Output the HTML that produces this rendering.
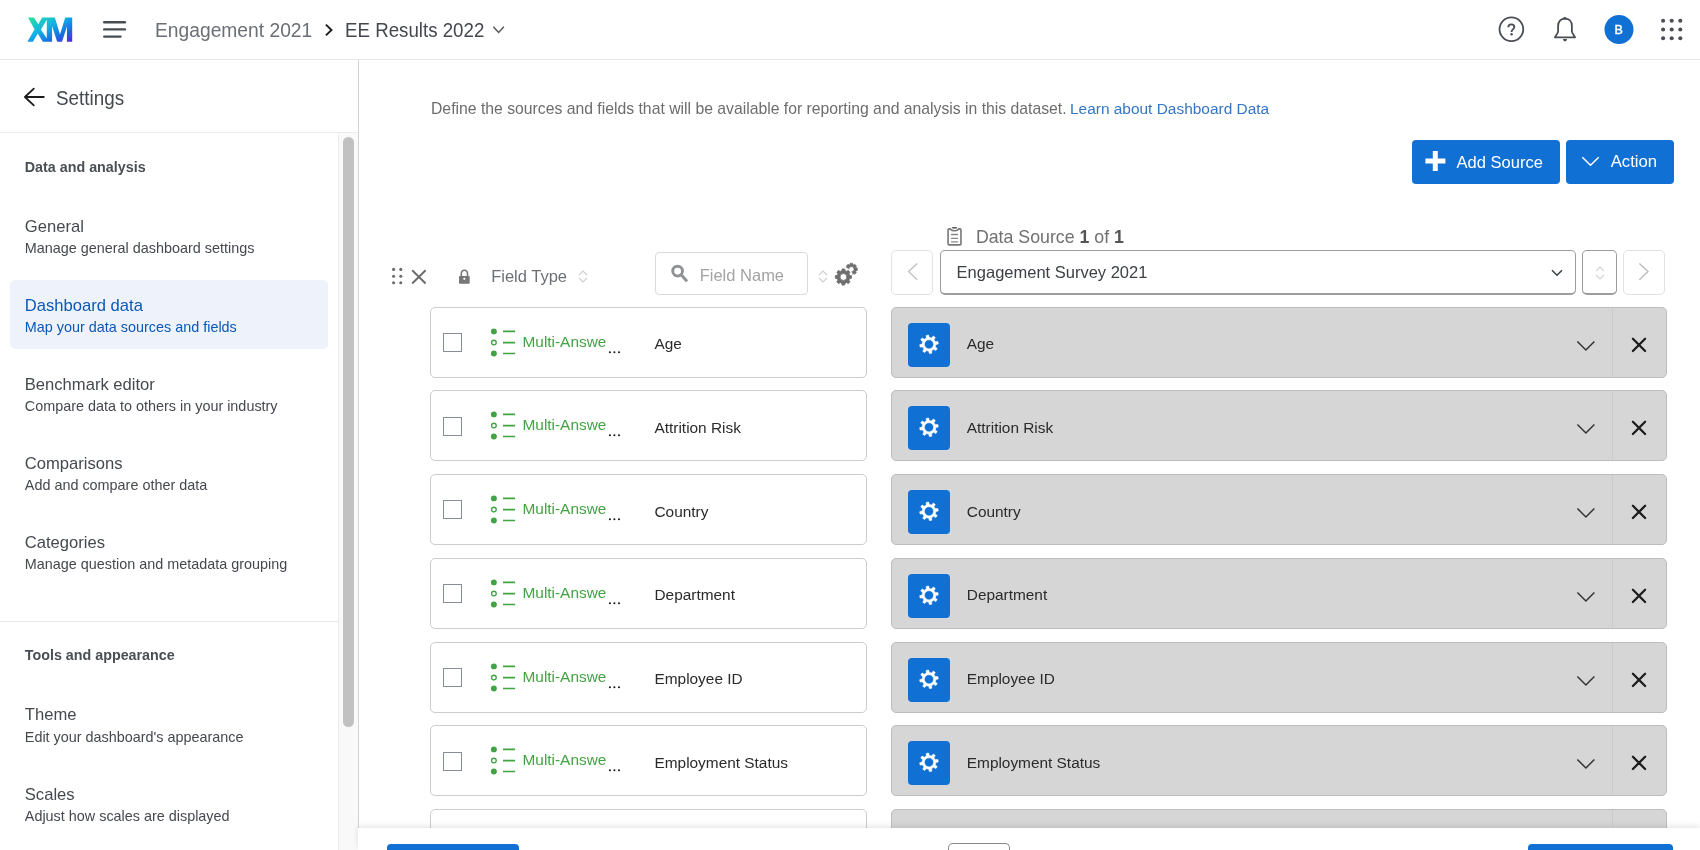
<!DOCTYPE html>
<html><head><meta charset="utf-8"><title>Dashboard data</title>
<style>
html,body{margin:0;padding:0;width:1700px;height:850px;overflow:hidden;background:#fff;}
body{position:relative;font-family:"Liberation Sans",sans-serif;}
.a{position:absolute;box-sizing:border-box;}
.t{position:absolute;white-space:nowrap;line-height:1;}
svg.a{overflow:visible;}
</style></head><body>
<div id="root" style="position:absolute;left:0;top:0;width:1700px;height:850px;will-change:transform;background:#fff;overflow:hidden">
<div class="a" style="left:0.0px;top:0.0px;width:1700.0px;height:59.0px;background:#fff"></div>
<div class="a" style="left:0.0px;top:59.0px;width:1700.0px;height:1.0px;background:#e6e6e6"></div>
<svg class="a" style="left:24.0px;top:14.0px" width="54" height="32" viewBox="0 0 1434 850"><defs><linearGradient id="xmg" x1="0" y1="0" x2="1" y2="1">
<stop offset="0" stop-color="#2ee39a"/><stop offset="0.42" stop-color="#10b2e6"/><stop offset="0.72" stop-color="#1670e4"/><stop offset="1" stop-color="#5a22e0"/></linearGradient></defs>
<path fill="url(#xmg)" fill-rule="evenodd" d="M105 95 L265 95 L380 275 L480 95 L820 95 L955 545 L1095 95 L1280 95 L1280 740 L1140 740 L1140 330 L1010 740 L880 740 L745 320 L745 740 L500 740 L365 520 L235 740 L90 740 L280 405 Z M605 155 L450 410 L605 650 Z"/></svg>
<svg class="a" style="left:102.0px;top:20.0px" width="26" height="18" viewBox="0 0 26 18"><g stroke="#484c53" stroke-width="2.4" stroke-linecap="round"><line x1="2.2" y1="2.2" x2="22.9" y2="2.2"/><line x1="2.2" y1="9.4" x2="22.9" y2="9.4"/><line x1="2.2" y1="16.6" x2="18.5" y2="16.6"/></g></svg>
<div class="t" style="left:155.3px;top:20.00px;font-size:20.0px;color:#6b6f76;font-weight:400;transform:scaleX(0.962);transform-origin:0 0;">Engagement 2021</div>
<svg class="a" style="left:321.0px;top:22.0px" width="14" height="16" viewBox="0 0 14 16"><path d="M4.9 2.6 L10.5 8 L4.9 13.4" fill="none" stroke="#1a1a1a" stroke-width="1.9"/></svg>
<div class="t" style="left:344.6px;top:20.00px;font-size:20.0px;color:#44484e;font-weight:400;transform:scaleX(0.935);transform-origin:0 0;">EE Results 2022</div>
<svg class="a" style="left:490.0px;top:24.0px" width="18" height="12" viewBox="0 0 18 12"><path d="M3.3 2.8 L8.6 8.4 L13.9 2.8" fill="none" stroke="#555" stroke-width="1.4"/></svg>
<svg class="a" style="left:1496.0px;top:14.0px" width="30" height="30" viewBox="0 0 30 30"><circle cx="15.4" cy="15.3" r="11.85" fill="none" stroke="#4a4e55" stroke-width="1.8"/><path d="M12.3 13.3 C12.3 11.3 13.6 10.4 15.3 10.4 C17.1 10.4 18.3 11.6 18.3 13.1 C18.3 15.3 15.6 15.4 15.6 17.6 V18" fill="none" stroke="#4a4e55" stroke-width="1.9"/><circle cx="15.6" cy="20.2" r="1.2" fill="#4a4e55"/></svg>
<svg class="a" style="left:1552.0px;top:15.0px" width="26" height="28" viewBox="0 0 26 28"><path d="M13 3.7 C8.7 3.7 6.1 6.6 6.1 11 V16.6 C6.1 18.2 3.4 21.2 2.9 22.3 H23.1 C22.6 21.2 19.9 18.2 19.9 16.6 V11 C19.9 6.6 17.3 3.7 13 3.7 Z" fill="none" stroke="#4a4e55" stroke-width="1.8" stroke-linejoin="round"/><path d="M10.9 24.0 H15.1 C14.9 25.6 14 26.3 13 26.3 C12 26.3 11.1 25.6 10.9 24.0Z" fill="#4a4e55"/><ellipse cx="12.9" cy="3.2" rx="1.7" ry="1.2" fill="#4a4e55"/></svg>
<svg class="a" style="left:1603.5px;top:15.0px" width="30" height="30" viewBox="0 0 30 30"><circle cx="15" cy="14.6" r="14.5" fill="#1170d4"/></svg>
<div class="t" style="left:1612.6px;top:24.00px;font-size:12.5px;color:#ffffff;font-weight:400;width:12px;text-align:center;-webkit-text-stroke:0.45px #fff;">B</div>
<svg class="a" style="left:1659.0px;top:18.0px" width="26" height="26" viewBox="0 0 26 26"><circle cx="4.10" cy="2.70" r="2.05" fill="#4a4e55"/><circle cx="12.70" cy="2.70" r="2.05" fill="#4a4e55"/><circle cx="21.30" cy="2.70" r="2.05" fill="#4a4e55"/><circle cx="4.10" cy="11.45" r="2.05" fill="#4a4e55"/><circle cx="12.70" cy="11.45" r="2.05" fill="#4a4e55"/><circle cx="21.30" cy="11.45" r="2.05" fill="#4a4e55"/><circle cx="4.10" cy="20.20" r="2.05" fill="#4a4e55"/><circle cx="12.70" cy="20.20" r="2.05" fill="#4a4e55"/><circle cx="21.30" cy="20.20" r="2.05" fill="#4a4e55"/></svg>
<div class="a" style="left:357.5px;top:60.0px;width:1.3px;height:790.0px;background:#d2d2d2"></div>
<svg class="a" style="left:22.0px;top:86.0px" width="24" height="22" viewBox="0 0 24 22"><path d="M11.8 2.6 L2.9 11 L11.8 19.4 M2.9 11 H21.8" fill="none" stroke="#1b1b1b" stroke-width="1.8" stroke-linecap="round" stroke-linejoin="round"/></svg>
<div class="t" style="left:56.3px;top:88.00px;font-size:20.5px;color:#44484e;font-weight:400;transform:scaleX(0.92);transform-origin:0 0;">Settings</div>
<div class="a" style="left:0.0px;top:132.0px;width:357.5px;height:1.0px;background:#ececec"></div>
<div class="a" style="left:338.0px;top:133.0px;width:19.5px;height:717.0px;background:#f9f9f9;border-left:1px solid #ececec"></div>
<div class="a" style="left:342.5px;top:137.0px;width:11.5px;height:590.0px;background:#c1c1c1;border-radius:6px"></div>
<div class="a" style="left:9.5px;top:280.4px;width:318.5px;height:69.0px;background:#eef3fb;border-radius:5px"></div>
<div class="t" style="left:24.8px;top:160.00px;font-size:14.3px;color:#4a4e55;font-weight:700;">Data and analysis</div>
<div class="t" style="left:24.8px;top:219.00px;font-size:16.6px;color:#45494f;font-weight:400;">General</div>
<div class="t" style="left:24.8px;top:241.00px;font-size:14.4px;color:#45494f;font-weight:400;">Manage general dashboard settings</div>
<div class="t" style="left:24.8px;top:298.00px;font-size:16.6px;color:#0b57b8;font-weight:400;">Dashboard data</div>
<div class="t" style="left:24.8px;top:320.00px;font-size:14.4px;color:#0b57b8;font-weight:400;">Map your data sources and fields</div>
<div class="t" style="left:24.8px;top:377.00px;font-size:16.6px;color:#45494f;font-weight:400;">Benchmark editor</div>
<div class="t" style="left:24.8px;top:399.00px;font-size:14.4px;color:#45494f;font-weight:400;">Compare data to others in your industry</div>
<div class="t" style="left:24.8px;top:456.00px;font-size:16.6px;color:#45494f;font-weight:400;">Comparisons</div>
<div class="t" style="left:24.8px;top:478.00px;font-size:14.4px;color:#45494f;font-weight:400;">Add and compare other data</div>
<div class="t" style="left:24.8px;top:535.00px;font-size:16.6px;color:#45494f;font-weight:400;">Categories</div>
<div class="t" style="left:24.8px;top:557.00px;font-size:14.4px;color:#45494f;font-weight:400;">Manage question and metadata grouping</div>
<div class="a" style="left:0.0px;top:621.0px;width:339.0px;height:1.0px;background:#e8e8e8"></div>
<div class="t" style="left:24.8px;top:648.00px;font-size:14.3px;color:#4a4e55;font-weight:700;">Tools and appearance</div>
<div class="t" style="left:24.8px;top:707.00px;font-size:16.6px;color:#45494f;font-weight:400;">Theme</div>
<div class="t" style="left:24.8px;top:730.00px;font-size:14.4px;color:#45494f;font-weight:400;">Edit your dashboard's appearance</div>
<div class="t" style="left:24.8px;top:787.00px;font-size:16.6px;color:#45494f;font-weight:400;">Scales</div>
<div class="t" style="left:24.8px;top:809.00px;font-size:14.4px;color:#45494f;font-weight:400;">Adjust how scales are displayed</div>
<div class="t" style="left:431.0px;top:101.00px;font-size:15.75px;color:#6d6d6d;font-weight:400;">Define the sources and fields that will be available for reporting and analysis in this dataset.</div>
<div class="t" style="left:1070.0px;top:101.00px;font-size:15.45px;color:#3476c4;font-weight:400;">Learn about Dashboard Data</div>
<div class="a" style="left:1411.8px;top:140.0px;width:148.0px;height:43.7px;background:#1170d4;border-radius:4px"></div>
<svg class="a" style="left:1425.0px;top:151.0px" width="21" height="20" viewBox="0 0 21 20"><path d="M10.3 0 V20 M0.4 10 H20.4" stroke="#fff" stroke-width="5"/></svg>
<div class="t" style="left:1456.6px;top:154.00px;font-size:16.5px;color:#fff;font-weight:400;">Add Source</div>
<div class="a" style="left:1566.2px;top:140.0px;width:107.8px;height:43.7px;background:#1170d4;border-radius:4px"></div>
<svg class="a" style="left:1580.0px;top:154.0px" width="22" height="14" viewBox="0 0 22 14"><path d="M2.3 3.3 L10.5 11.3 L18.7 3.3" fill="none" stroke="#fff" stroke-width="1.5"/></svg>
<div class="t" style="left:1610.7px;top:154.00px;font-size:16.7px;color:#fff;font-weight:400;">Action</div>
<svg class="a" style="left:945.0px;top:225.0px" width="19" height="22" viewBox="0 0 19 22"><path d="M3.07 5.0 Q3.07 3.9 4.2 3.9 L4.9 3.9 Q5.6 3.9 6.1 4.8 Q6.9 5.75 9.5 5.75 Q12.1 5.75 12.9 4.8 Q13.4 3.9 14.1 3.9 L14.9 3.9 Q15.97 3.9 15.97 5.0 L15.97 18.8 Q15.97 19.92 14.9 19.92 L4.2 19.92 Q3.07 19.92 3.07 18.8 Z" fill="none" stroke="#777" stroke-width="1.6"/><path d="M6.6 1.9 H12.4 Q12.2 3.8 9.5 3.8 Q6.8 3.8 6.6 1.9 Z" fill="#666"/><path d="M6.5 9.5 H12.5 M6.5 13.3 H12.5 M6.5 16.8 H12.5" stroke="#888" stroke-width="1.3" stroke-linecap="round"/></svg>
<div class="t" style="left:975.9px;top:229.00px;font-size:17.75px;color:#707070;font-weight:400;">Data Source <b style="color:#555">1</b> of <b style="color:#555">1</b></div>
<svg class="a" style="left:390.0px;top:266.0px" width="14" height="20" viewBox="0 0 14 20"><circle cx="3.6" cy="3.4" r="1.55" fill="#6b6b6b"/><circle cx="3.6" cy="10.2" r="1.55" fill="#6b6b6b"/><circle cx="3.6" cy="16.8" r="1.55" fill="#6b6b6b"/><circle cx="10.8" cy="3.4" r="1.55" fill="#6b6b6b"/><circle cx="10.8" cy="10.2" r="1.55" fill="#6b6b6b"/><circle cx="10.8" cy="16.8" r="1.55" fill="#6b6b6b"/></svg>
<svg class="a" style="left:410.0px;top:268.0px" width="18" height="18" viewBox="0 0 18 18"><path d="M2.2 2.3 L15.6 15.5 M15.6 2.3 L2.2 15.5" stroke="#6b6b6b" stroke-width="1.9"/></svg>
<svg class="a" style="left:457.0px;top:268.0px" width="15" height="18" viewBox="0 0 15 18"><path d="M4.3 8 V5.9 C4.3 3.6 5.7 2.2 7.4 2.2 C9.1 2.2 10.5 3.6 10.5 5.9 V8" fill="none" stroke="#777" stroke-width="1.6"/><rect x="2" y="7.9" width="10.7" height="7.9" rx="0.8" fill="#777"/><circle cx="7.3" cy="10.8" r="1.1" fill="#fff"/></svg>
<div class="t" style="left:491.2px;top:268.00px;font-size:16.5px;color:#6b6f76;font-weight:400;">Field Type</div>
<svg class="a" style="left:577.8px;top:270.2px" width="10" height="13" viewBox="0 0 10 13"><path d="M1 5 L5 1 L9 5 M1 8 L5 12 L9 8" fill="none" stroke="#cfcfcf" stroke-width="1.1"/></svg>
<div class="a" style="left:654.8px;top:252.0px;width:153.0px;height:42.7px;border:1px solid #dadada;border-radius:4px;background:#fff"></div>
<svg class="a" style="left:668.0px;top:262.0px" width="24" height="24" viewBox="0 0 24 24"><circle cx="9.6" cy="9.1" r="4.9" fill="none" stroke="#909295" stroke-width="2.9"/><path d="M13.4 12.9 L18.3 18.4" stroke="#909295" stroke-width="3" stroke-linecap="round"/></svg>
<div class="t" style="left:699.7px;top:267.00px;font-size:16.5px;color:#a3a3a3;font-weight:400;">Field Name</div>
<svg class="a" style="left:818.0px;top:269.8px" width="10" height="13" viewBox="0 0 10 13"><path d="M1 5 L5 1 L9 5 M1 8 L5 12 L9 8" fill="none" stroke="#cfcfcf" stroke-width="1.1"/></svg>
<svg class="a" style="left:832.0px;top:260.0px" width="30" height="28" viewBox="0 0 30 28"><path fill="#6e6e6e" stroke="#6e6e6e" stroke-width="0.7" stroke-linejoin="round" fill-rule="evenodd" d="M17.92 4.63 L18.15 3.33 L20.65 3.33 L20.88 4.63 L21.24 4.77 L21.58 4.92 L22.67 4.17 L24.43 5.93 L23.68 7.02 L23.83 7.36 L23.97 7.72 L25.27 7.95 L25.27 10.45 L23.97 10.68 L23.83 11.04 L23.68 11.38 L24.43 12.47 L22.67 14.23 L21.58 13.48 L21.24 13.63 L20.88 13.77 L20.65 15.07 L18.15 15.07 L17.92 13.77 L17.56 13.63 L17.22 13.48 L16.13 14.23 L14.37 12.47 L15.12 11.38 L14.97 11.04 L14.83 10.68 L13.53 10.45 L13.53 7.95 L14.83 7.72 L14.97 7.36 L15.12 7.02 L14.37 5.93 L16.13 4.17 L17.22 4.92 L17.56 4.77 Z M22.00 9.20 A2.6 2.6 0 1 0 16.80 9.20 A2.6 2.6 0 1 0 22.00 9.20 Z"/><circle cx="11.4" cy="17.0" r="9.8" fill="#fff"/><path fill="#6e6e6e" stroke="#6e6e6e" stroke-width="0.8" stroke-linejoin="round" fill-rule="evenodd" d="M9.74 10.82 L10.12 8.90 L12.68 8.90 L13.06 10.82 L13.85 11.09 L14.60 11.46 L16.22 10.37 L18.03 12.18 L16.94 13.80 L17.31 14.55 L17.58 15.34 L19.50 15.72 L19.50 18.28 L17.58 18.66 L17.31 19.45 L16.94 20.20 L18.03 21.82 L16.22 23.63 L14.60 22.54 L13.85 22.91 L13.06 23.18 L12.68 25.10 L10.12 25.10 L9.74 23.18 L8.95 22.91 L8.20 22.54 L6.58 23.63 L4.77 21.82 L5.86 20.20 L5.49 19.45 L5.22 18.66 L3.30 18.28 L3.30 15.72 L5.22 15.34 L5.49 14.55 L5.86 13.80 L4.77 12.18 L6.58 10.37 L8.20 11.46 L8.95 11.09 Z M14.80 17.00 A3.4 3.4 0 1 0 8.00 17.00 A3.4 3.4 0 1 0 14.80 17.00 Z"/></svg>
<div class="a" style="left:891.4px;top:250.3px;width:42.0px;height:44.3px;border:1.3px solid #e2e2e2;border-radius:5px;background:#fff"></div>
<svg class="a" style="left:906.0px;top:262.0px" width="14" height="20" viewBox="0 0 14 20"><path d="M11.2 1.4 L2.6 9.6 L11.2 17.8" fill="none" stroke="#c2c2c2" stroke-width="1.4"/></svg>
<div class="a" style="left:939.7px;top:250.3px;width:636.3px;height:44.3px;border:1.5px solid #9d9d9d;border-bottom-width:2px;border-radius:5px;background:#fff"></div>
<div class="t" style="left:956.6px;top:264.00px;font-size:16.5px;color:#3d4046;font-weight:400;">Engagement Survey 2021</div>
<svg class="a" style="left:1550.0px;top:268.0px" width="14" height="10" viewBox="0 0 14 10"><path d="M2 2.2 L7 7.2 L12 2.2" fill="none" stroke="#3c4048" stroke-width="1.6"/></svg>
<div class="a" style="left:1582.1px;top:250.3px;width:34.6px;height:44.3px;border:1.5px solid #9d9d9d;border-bottom-width:2px;border-radius:5px;background:#fff"></div>
<svg class="a" style="left:1594.9px;top:266.2px" width="10" height="14" viewBox="0 0 10 14"><path d="M1 5 L5 1 L9 5 M1 9 L5 13 L9 9" fill="none" stroke="#d3d3d3" stroke-width="1.1"/></svg>
<div class="a" style="left:1622.7px;top:250.3px;width:42.3px;height:44.3px;border:1.3px solid #e2e2e2;border-radius:5px;background:#fff"></div>
<svg class="a" style="left:1637.0px;top:262.0px" width="14" height="20" viewBox="0 0 14 20"><path d="M2.4 1.4 L11 9.6 L2.4 17.8" fill="none" stroke="#bdbdbd" stroke-width="1.4"/></svg>
<div class="a" style="left:430.4px;top:306.7px;width:436.5px;height:71.0px;border:1px solid #cdcdcd;border-radius:5px;background:#fff"></div>
<div class="a" style="left:891.0px;top:306.7px;width:776.0px;height:71.0px;border:1px solid #bdbdbd;border-radius:5px;background:#d6d6d6"></div>
<div class="a" style="left:443.0px;top:332.9px;width:19.1px;height:19.0px;border:1.6px solid #868c98;background:#fff"></div>
<svg class="a" style="left:488.0px;top:324.7px" width="30" height="34" viewBox="0 0 30 34"><circle cx="5.9" cy="6.4" r="2.95" fill="#42a344"/><circle cx="5.9" cy="17.6" r="2.35" fill="none" stroke="#42a344" stroke-width="1.3"/><circle cx="5.9" cy="28.5" r="2.95" fill="#42a344"/><path d="M15 6.4 H27.1 M15 17.6 H27.1 M15 28.5 H27.1" stroke="#42a344" stroke-width="1.6"/></svg>
<div class="t" style="left:522.5px;top:334.00px;font-size:15.4px;color:#42a344;font-weight:400;">Multi-Answe</div>
<svg class="a" style="left:606.0px;top:348.7px" width="16" height="6" viewBox="0 0 16 6"><circle cx="3.9" cy="3.3" r="1.05" fill="#1a1a1a"/><circle cx="8.4" cy="3.3" r="1.05" fill="#1a1a1a"/><circle cx="13.0" cy="3.3" r="1.05" fill="#1a1a1a"/></svg>
<div class="t" style="left:654.5px;top:336.00px;font-size:15.4px;color:#2b2b2b;font-weight:400;">Age</div>
<div class="a" style="left:908.2px;top:322.7px;width:42.2px;height:44.0px;background:#1170d4;border-radius:4px"></div>
<svg class="a" style="left:908.2px;top:322.7px" width="42" height="44" viewBox="0 0 42 44"><path fill="#fff" stroke="#fff" stroke-width="0.6" stroke-linejoin="round" fill-rule="evenodd" d="M18.40 15.02 L18.20 12.43 L20.59 12.01 L21.30 14.51 L22.47 14.66 L23.60 15.02 L25.29 13.05 L27.28 14.44 L26.01 16.71 L26.74 17.65 L27.28 18.70 L29.87 18.50 L30.29 20.89 L27.79 21.60 L27.64 22.77 L27.28 23.90 L29.25 25.59 L27.86 27.58 L25.59 26.31 L24.65 27.04 L23.60 27.58 L23.80 30.17 L21.41 30.59 L20.70 28.09 L19.53 27.94 L18.40 27.58 L16.71 29.55 L14.72 28.16 L15.99 25.89 L15.26 24.95 L14.72 23.90 L12.13 24.10 L11.71 21.71 L14.21 21.00 L14.36 19.83 L14.72 18.70 L12.75 17.01 L14.14 15.02 L16.41 16.29 L17.35 15.56 Z M25.60 21.30 A4.6 4.6 0 1 0 16.40 21.30 A4.6 4.6 0 1 0 25.60 21.30 Z"/></svg>
<div class="t" style="left:966.8px;top:336.00px;font-size:15.4px;color:#2b2b2b;font-weight:400;">Age</div>
<svg class="a" style="left:1575.0px;top:338.7px" width="22" height="14" viewBox="0 0 22 14"><path d="M2.4 2.5 L10.9 11 L19.4 2.5" fill="none" stroke="#333" stroke-width="1.5"/></svg>
<div class="a" style="left:1612.2px;top:307.7px;width:1.0px;height:69.0px;background:#cbcbcb"></div>
<svg class="a" style="left:1630.0px;top:335.7px" width="18" height="18" viewBox="0 0 18 18"><path d="M2.9 2.8 L15.1 15.0 M15.1 2.8 L2.9 15.0" stroke="#1c1c1c" stroke-width="2.3" stroke-linecap="round"/></svg>
<div class="a" style="left:430.4px;top:390.4px;width:436.5px;height:71.0px;border:1px solid #cdcdcd;border-radius:5px;background:#fff"></div>
<div class="a" style="left:891.0px;top:390.4px;width:776.0px;height:71.0px;border:1px solid #bdbdbd;border-radius:5px;background:#d6d6d6"></div>
<div class="a" style="left:443.0px;top:416.6px;width:19.1px;height:19.0px;border:1.6px solid #868c98;background:#fff"></div>
<svg class="a" style="left:488.0px;top:408.4px" width="30" height="34" viewBox="0 0 30 34"><circle cx="5.9" cy="6.4" r="2.95" fill="#42a344"/><circle cx="5.9" cy="17.6" r="2.35" fill="none" stroke="#42a344" stroke-width="1.3"/><circle cx="5.9" cy="28.5" r="2.95" fill="#42a344"/><path d="M15 6.4 H27.1 M15 17.6 H27.1 M15 28.5 H27.1" stroke="#42a344" stroke-width="1.6"/></svg>
<div class="t" style="left:522.5px;top:417.00px;font-size:15.4px;color:#42a344;font-weight:400;">Multi-Answe</div>
<svg class="a" style="left:606.0px;top:432.4px" width="16" height="6" viewBox="0 0 16 6"><circle cx="3.9" cy="3.3" r="1.05" fill="#1a1a1a"/><circle cx="8.4" cy="3.3" r="1.05" fill="#1a1a1a"/><circle cx="13.0" cy="3.3" r="1.05" fill="#1a1a1a"/></svg>
<div class="t" style="left:654.5px;top:420.00px;font-size:15.4px;color:#2b2b2b;font-weight:400;">Attrition Risk</div>
<div class="a" style="left:908.2px;top:406.4px;width:42.2px;height:44.0px;background:#1170d4;border-radius:4px"></div>
<svg class="a" style="left:908.2px;top:406.4px" width="42" height="44" viewBox="0 0 42 44"><path fill="#fff" stroke="#fff" stroke-width="0.6" stroke-linejoin="round" fill-rule="evenodd" d="M18.40 15.02 L18.20 12.43 L20.59 12.01 L21.30 14.51 L22.47 14.66 L23.60 15.02 L25.29 13.05 L27.28 14.44 L26.01 16.71 L26.74 17.65 L27.28 18.70 L29.87 18.50 L30.29 20.89 L27.79 21.60 L27.64 22.77 L27.28 23.90 L29.25 25.59 L27.86 27.58 L25.59 26.31 L24.65 27.04 L23.60 27.58 L23.80 30.17 L21.41 30.59 L20.70 28.09 L19.53 27.94 L18.40 27.58 L16.71 29.55 L14.72 28.16 L15.99 25.89 L15.26 24.95 L14.72 23.90 L12.13 24.10 L11.71 21.71 L14.21 21.00 L14.36 19.83 L14.72 18.70 L12.75 17.01 L14.14 15.02 L16.41 16.29 L17.35 15.56 Z M25.60 21.30 A4.6 4.6 0 1 0 16.40 21.30 A4.6 4.6 0 1 0 25.60 21.30 Z"/></svg>
<div class="t" style="left:966.8px;top:420.00px;font-size:15.4px;color:#2b2b2b;font-weight:400;">Attrition Risk</div>
<svg class="a" style="left:1575.0px;top:422.4px" width="22" height="14" viewBox="0 0 22 14"><path d="M2.4 2.5 L10.9 11 L19.4 2.5" fill="none" stroke="#333" stroke-width="1.5"/></svg>
<div class="a" style="left:1612.2px;top:391.4px;width:1.0px;height:69.0px;background:#cbcbcb"></div>
<svg class="a" style="left:1630.0px;top:419.4px" width="18" height="18" viewBox="0 0 18 18"><path d="M2.9 2.8 L15.1 15.0 M15.1 2.8 L2.9 15.0" stroke="#1c1c1c" stroke-width="2.3" stroke-linecap="round"/></svg>
<div class="a" style="left:430.4px;top:474.1px;width:436.5px;height:71.0px;border:1px solid #cdcdcd;border-radius:5px;background:#fff"></div>
<div class="a" style="left:891.0px;top:474.1px;width:776.0px;height:71.0px;border:1px solid #bdbdbd;border-radius:5px;background:#d6d6d6"></div>
<div class="a" style="left:443.0px;top:500.3px;width:19.1px;height:19.0px;border:1.6px solid #868c98;background:#fff"></div>
<svg class="a" style="left:488.0px;top:492.1px" width="30" height="34" viewBox="0 0 30 34"><circle cx="5.9" cy="6.4" r="2.95" fill="#42a344"/><circle cx="5.9" cy="17.6" r="2.35" fill="none" stroke="#42a344" stroke-width="1.3"/><circle cx="5.9" cy="28.5" r="2.95" fill="#42a344"/><path d="M15 6.4 H27.1 M15 17.6 H27.1 M15 28.5 H27.1" stroke="#42a344" stroke-width="1.6"/></svg>
<div class="t" style="left:522.5px;top:501.00px;font-size:15.4px;color:#42a344;font-weight:400;">Multi-Answe</div>
<svg class="a" style="left:606.0px;top:516.1px" width="16" height="6" viewBox="0 0 16 6"><circle cx="3.9" cy="3.3" r="1.05" fill="#1a1a1a"/><circle cx="8.4" cy="3.3" r="1.05" fill="#1a1a1a"/><circle cx="13.0" cy="3.3" r="1.05" fill="#1a1a1a"/></svg>
<div class="t" style="left:654.5px;top:504.00px;font-size:15.4px;color:#2b2b2b;font-weight:400;">Country</div>
<div class="a" style="left:908.2px;top:490.1px;width:42.2px;height:44.0px;background:#1170d4;border-radius:4px"></div>
<svg class="a" style="left:908.2px;top:490.1px" width="42" height="44" viewBox="0 0 42 44"><path fill="#fff" stroke="#fff" stroke-width="0.6" stroke-linejoin="round" fill-rule="evenodd" d="M18.40 15.02 L18.20 12.43 L20.59 12.01 L21.30 14.51 L22.47 14.66 L23.60 15.02 L25.29 13.05 L27.28 14.44 L26.01 16.71 L26.74 17.65 L27.28 18.70 L29.87 18.50 L30.29 20.89 L27.79 21.60 L27.64 22.77 L27.28 23.90 L29.25 25.59 L27.86 27.58 L25.59 26.31 L24.65 27.04 L23.60 27.58 L23.80 30.17 L21.41 30.59 L20.70 28.09 L19.53 27.94 L18.40 27.58 L16.71 29.55 L14.72 28.16 L15.99 25.89 L15.26 24.95 L14.72 23.90 L12.13 24.10 L11.71 21.71 L14.21 21.00 L14.36 19.83 L14.72 18.70 L12.75 17.01 L14.14 15.02 L16.41 16.29 L17.35 15.56 Z M25.60 21.30 A4.6 4.6 0 1 0 16.40 21.30 A4.6 4.6 0 1 0 25.60 21.30 Z"/></svg>
<div class="t" style="left:966.8px;top:504.00px;font-size:15.4px;color:#2b2b2b;font-weight:400;">Country</div>
<svg class="a" style="left:1575.0px;top:506.1px" width="22" height="14" viewBox="0 0 22 14"><path d="M2.4 2.5 L10.9 11 L19.4 2.5" fill="none" stroke="#333" stroke-width="1.5"/></svg>
<div class="a" style="left:1612.2px;top:475.1px;width:1.0px;height:69.0px;background:#cbcbcb"></div>
<svg class="a" style="left:1630.0px;top:503.1px" width="18" height="18" viewBox="0 0 18 18"><path d="M2.9 2.8 L15.1 15.0 M15.1 2.8 L2.9 15.0" stroke="#1c1c1c" stroke-width="2.3" stroke-linecap="round"/></svg>
<div class="a" style="left:430.4px;top:557.9px;width:436.5px;height:71.0px;border:1px solid #cdcdcd;border-radius:5px;background:#fff"></div>
<div class="a" style="left:891.0px;top:557.9px;width:776.0px;height:71.0px;border:1px solid #bdbdbd;border-radius:5px;background:#d6d6d6"></div>
<div class="a" style="left:443.0px;top:584.1px;width:19.1px;height:19.0px;border:1.6px solid #868c98;background:#fff"></div>
<svg class="a" style="left:488.0px;top:575.9px" width="30" height="34" viewBox="0 0 30 34"><circle cx="5.9" cy="6.4" r="2.95" fill="#42a344"/><circle cx="5.9" cy="17.6" r="2.35" fill="none" stroke="#42a344" stroke-width="1.3"/><circle cx="5.9" cy="28.5" r="2.95" fill="#42a344"/><path d="M15 6.4 H27.1 M15 17.6 H27.1 M15 28.5 H27.1" stroke="#42a344" stroke-width="1.6"/></svg>
<div class="t" style="left:522.5px;top:585.00px;font-size:15.4px;color:#42a344;font-weight:400;">Multi-Answe</div>
<svg class="a" style="left:606.0px;top:599.9px" width="16" height="6" viewBox="0 0 16 6"><circle cx="3.9" cy="3.3" r="1.05" fill="#1a1a1a"/><circle cx="8.4" cy="3.3" r="1.05" fill="#1a1a1a"/><circle cx="13.0" cy="3.3" r="1.05" fill="#1a1a1a"/></svg>
<div class="t" style="left:654.5px;top:587.00px;font-size:15.4px;color:#2b2b2b;font-weight:400;">Department</div>
<div class="a" style="left:908.2px;top:573.9px;width:42.2px;height:44.0px;background:#1170d4;border-radius:4px"></div>
<svg class="a" style="left:908.2px;top:573.9px" width="42" height="44" viewBox="0 0 42 44"><path fill="#fff" stroke="#fff" stroke-width="0.6" stroke-linejoin="round" fill-rule="evenodd" d="M18.40 15.02 L18.20 12.43 L20.59 12.01 L21.30 14.51 L22.47 14.66 L23.60 15.02 L25.29 13.05 L27.28 14.44 L26.01 16.71 L26.74 17.65 L27.28 18.70 L29.87 18.50 L30.29 20.89 L27.79 21.60 L27.64 22.77 L27.28 23.90 L29.25 25.59 L27.86 27.58 L25.59 26.31 L24.65 27.04 L23.60 27.58 L23.80 30.17 L21.41 30.59 L20.70 28.09 L19.53 27.94 L18.40 27.58 L16.71 29.55 L14.72 28.16 L15.99 25.89 L15.26 24.95 L14.72 23.90 L12.13 24.10 L11.71 21.71 L14.21 21.00 L14.36 19.83 L14.72 18.70 L12.75 17.01 L14.14 15.02 L16.41 16.29 L17.35 15.56 Z M25.60 21.30 A4.6 4.6 0 1 0 16.40 21.30 A4.6 4.6 0 1 0 25.60 21.30 Z"/></svg>
<div class="t" style="left:966.8px;top:587.00px;font-size:15.4px;color:#2b2b2b;font-weight:400;">Department</div>
<svg class="a" style="left:1575.0px;top:589.9px" width="22" height="14" viewBox="0 0 22 14"><path d="M2.4 2.5 L10.9 11 L19.4 2.5" fill="none" stroke="#333" stroke-width="1.5"/></svg>
<div class="a" style="left:1612.2px;top:558.9px;width:1.0px;height:69.0px;background:#cbcbcb"></div>
<svg class="a" style="left:1630.0px;top:586.9px" width="18" height="18" viewBox="0 0 18 18"><path d="M2.9 2.8 L15.1 15.0 M15.1 2.8 L2.9 15.0" stroke="#1c1c1c" stroke-width="2.3" stroke-linecap="round"/></svg>
<div class="a" style="left:430.4px;top:641.6px;width:436.5px;height:71.0px;border:1px solid #cdcdcd;border-radius:5px;background:#fff"></div>
<div class="a" style="left:891.0px;top:641.6px;width:776.0px;height:71.0px;border:1px solid #bdbdbd;border-radius:5px;background:#d6d6d6"></div>
<div class="a" style="left:443.0px;top:667.8px;width:19.1px;height:19.0px;border:1.6px solid #868c98;background:#fff"></div>
<svg class="a" style="left:488.0px;top:659.6px" width="30" height="34" viewBox="0 0 30 34"><circle cx="5.9" cy="6.4" r="2.95" fill="#42a344"/><circle cx="5.9" cy="17.6" r="2.35" fill="none" stroke="#42a344" stroke-width="1.3"/><circle cx="5.9" cy="28.5" r="2.95" fill="#42a344"/><path d="M15 6.4 H27.1 M15 17.6 H27.1 M15 28.5 H27.1" stroke="#42a344" stroke-width="1.6"/></svg>
<div class="t" style="left:522.5px;top:669.00px;font-size:15.4px;color:#42a344;font-weight:400;">Multi-Answe</div>
<svg class="a" style="left:606.0px;top:683.6px" width="16" height="6" viewBox="0 0 16 6"><circle cx="3.9" cy="3.3" r="1.05" fill="#1a1a1a"/><circle cx="8.4" cy="3.3" r="1.05" fill="#1a1a1a"/><circle cx="13.0" cy="3.3" r="1.05" fill="#1a1a1a"/></svg>
<div class="t" style="left:654.5px;top:671.00px;font-size:15.4px;color:#2b2b2b;font-weight:400;">Employee ID</div>
<div class="a" style="left:908.2px;top:657.6px;width:42.2px;height:44.0px;background:#1170d4;border-radius:4px"></div>
<svg class="a" style="left:908.2px;top:657.6px" width="42" height="44" viewBox="0 0 42 44"><path fill="#fff" stroke="#fff" stroke-width="0.6" stroke-linejoin="round" fill-rule="evenodd" d="M18.40 15.02 L18.20 12.43 L20.59 12.01 L21.30 14.51 L22.47 14.66 L23.60 15.02 L25.29 13.05 L27.28 14.44 L26.01 16.71 L26.74 17.65 L27.28 18.70 L29.87 18.50 L30.29 20.89 L27.79 21.60 L27.64 22.77 L27.28 23.90 L29.25 25.59 L27.86 27.58 L25.59 26.31 L24.65 27.04 L23.60 27.58 L23.80 30.17 L21.41 30.59 L20.70 28.09 L19.53 27.94 L18.40 27.58 L16.71 29.55 L14.72 28.16 L15.99 25.89 L15.26 24.95 L14.72 23.90 L12.13 24.10 L11.71 21.71 L14.21 21.00 L14.36 19.83 L14.72 18.70 L12.75 17.01 L14.14 15.02 L16.41 16.29 L17.35 15.56 Z M25.60 21.30 A4.6 4.6 0 1 0 16.40 21.30 A4.6 4.6 0 1 0 25.60 21.30 Z"/></svg>
<div class="t" style="left:966.8px;top:671.00px;font-size:15.4px;color:#2b2b2b;font-weight:400;">Employee ID</div>
<svg class="a" style="left:1575.0px;top:673.6px" width="22" height="14" viewBox="0 0 22 14"><path d="M2.4 2.5 L10.9 11 L19.4 2.5" fill="none" stroke="#333" stroke-width="1.5"/></svg>
<div class="a" style="left:1612.2px;top:642.6px;width:1.0px;height:69.0px;background:#cbcbcb"></div>
<svg class="a" style="left:1630.0px;top:670.6px" width="18" height="18" viewBox="0 0 18 18"><path d="M2.9 2.8 L15.1 15.0 M15.1 2.8 L2.9 15.0" stroke="#1c1c1c" stroke-width="2.3" stroke-linecap="round"/></svg>
<div class="a" style="left:430.4px;top:725.3px;width:436.5px;height:71.0px;border:1px solid #cdcdcd;border-radius:5px;background:#fff"></div>
<div class="a" style="left:891.0px;top:725.3px;width:776.0px;height:71.0px;border:1px solid #bdbdbd;border-radius:5px;background:#d6d6d6"></div>
<div class="a" style="left:443.0px;top:751.5px;width:19.1px;height:19.0px;border:1.6px solid #868c98;background:#fff"></div>
<svg class="a" style="left:488.0px;top:743.3px" width="30" height="34" viewBox="0 0 30 34"><circle cx="5.9" cy="6.4" r="2.95" fill="#42a344"/><circle cx="5.9" cy="17.6" r="2.35" fill="none" stroke="#42a344" stroke-width="1.3"/><circle cx="5.9" cy="28.5" r="2.95" fill="#42a344"/><path d="M15 6.4 H27.1 M15 17.6 H27.1 M15 28.5 H27.1" stroke="#42a344" stroke-width="1.6"/></svg>
<div class="t" style="left:522.5px;top:752.00px;font-size:15.4px;color:#42a344;font-weight:400;">Multi-Answe</div>
<svg class="a" style="left:606.0px;top:767.3px" width="16" height="6" viewBox="0 0 16 6"><circle cx="3.9" cy="3.3" r="1.05" fill="#1a1a1a"/><circle cx="8.4" cy="3.3" r="1.05" fill="#1a1a1a"/><circle cx="13.0" cy="3.3" r="1.05" fill="#1a1a1a"/></svg>
<div class="t" style="left:654.5px;top:755.00px;font-size:15.4px;color:#2b2b2b;font-weight:400;">Employment Status</div>
<div class="a" style="left:908.2px;top:741.3px;width:42.2px;height:44.0px;background:#1170d4;border-radius:4px"></div>
<svg class="a" style="left:908.2px;top:741.3px" width="42" height="44" viewBox="0 0 42 44"><path fill="#fff" stroke="#fff" stroke-width="0.6" stroke-linejoin="round" fill-rule="evenodd" d="M18.40 15.02 L18.20 12.43 L20.59 12.01 L21.30 14.51 L22.47 14.66 L23.60 15.02 L25.29 13.05 L27.28 14.44 L26.01 16.71 L26.74 17.65 L27.28 18.70 L29.87 18.50 L30.29 20.89 L27.79 21.60 L27.64 22.77 L27.28 23.90 L29.25 25.59 L27.86 27.58 L25.59 26.31 L24.65 27.04 L23.60 27.58 L23.80 30.17 L21.41 30.59 L20.70 28.09 L19.53 27.94 L18.40 27.58 L16.71 29.55 L14.72 28.16 L15.99 25.89 L15.26 24.95 L14.72 23.90 L12.13 24.10 L11.71 21.71 L14.21 21.00 L14.36 19.83 L14.72 18.70 L12.75 17.01 L14.14 15.02 L16.41 16.29 L17.35 15.56 Z M25.60 21.30 A4.6 4.6 0 1 0 16.40 21.30 A4.6 4.6 0 1 0 25.60 21.30 Z"/></svg>
<div class="t" style="left:966.8px;top:755.00px;font-size:15.4px;color:#2b2b2b;font-weight:400;">Employment Status</div>
<svg class="a" style="left:1575.0px;top:757.3px" width="22" height="14" viewBox="0 0 22 14"><path d="M2.4 2.5 L10.9 11 L19.4 2.5" fill="none" stroke="#333" stroke-width="1.5"/></svg>
<div class="a" style="left:1612.2px;top:726.3px;width:1.0px;height:69.0px;background:#cbcbcb"></div>
<svg class="a" style="left:1630.0px;top:754.3px" width="18" height="18" viewBox="0 0 18 18"><path d="M2.9 2.8 L15.1 15.0 M15.1 2.8 L2.9 15.0" stroke="#1c1c1c" stroke-width="2.3" stroke-linecap="round"/></svg>
<div class="a" style="left:430.4px;top:809.0px;width:436.5px;height:71.0px;border:1px solid #cdcdcd;border-radius:5px;background:#fff"></div>
<div class="a" style="left:891.0px;top:809.0px;width:776.0px;height:71.0px;border:1px solid #bdbdbd;border-radius:5px;background:#d6d6d6"></div>
<div class="a" style="left:1612.2px;top:810.0px;width:1.0px;height:20.0px;background:#cbcbcb"></div>
<div class="a" style="left:358.0px;top:827.5px;width:1342.0px;height:22.5px;background:#fff;box-shadow:0 -2px 6px rgba(0,0,0,0.10)"></div>
<div class="a" style="left:387.4px;top:844.2px;width:132.0px;height:5.8px;background:#1170d4;border-radius:4px 4px 0 0"></div>
<div class="a" style="left:948.4px;top:843.0px;width:61.4px;height:7.0px;border:1.5px solid #8a8a8a;border-bottom:none;border-radius:5px 5px 0 0;background:#fff"></div>
<div class="a" style="left:1527.9px;top:844.2px;width:145.2px;height:5.8px;background:#1170d4;border-radius:4px 4px 0 0"></div>
</div>
</body></html>
